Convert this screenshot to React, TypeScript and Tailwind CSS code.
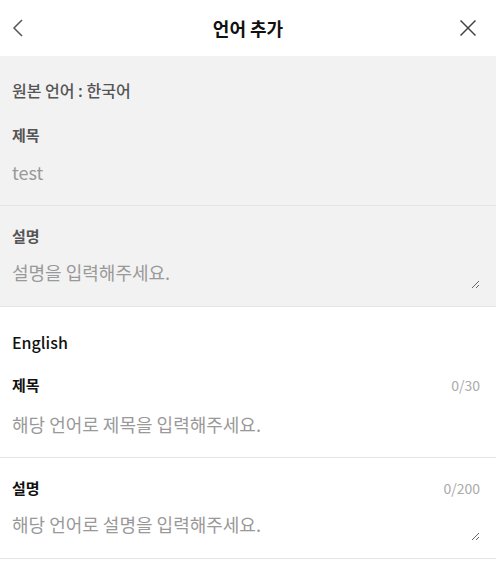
const font = { fontFamily: '"Noto Sans CJK KR", "Noto Sans", sans-serif' };

interface FieldProps {
  label: string;
  placeholder?: string;
  value?: string;
  counter?: string;
  multiline?: boolean;
  disabled?: boolean;
  last?: boolean;
}

function Field({ label, placeholder, value, counter, multiline, disabled, last }: FieldProps) {
  return (
    <div className={`pl-3 pr-4 ${last ? "" : "border-b border-[#e4e4e4]"} ${multiline ? "pt-[19px] pb-[17px]" : "pt-[20px] pb-[21px]"}`}>
      <div className="flex items-center justify-between h-[22px]">
        <span className={`text-[15px] font-bold leading-[22px] ${disabled ? "text-[#555]" : "text-[#111]"}`}>{label}</span>
        {counter && <span className="text-[14px] text-[#aaa] leading-[22px]">{counter}</span>}
      </div>
      {multiline ? (
        <textarea
          readOnly
          rows={1}
          placeholder={placeholder}
          style={font}
          className="mt-[13px] block w-full h-[29px] bg-transparent text-[18px] leading-[24px] outline-none placeholder:text-[#999] text-[#999]"
        />
      ) : (
        <input
          readOnly
          defaultValue={value}
          placeholder={placeholder}
          style={font}
          className={`${disabled ? "mt-[14px]" : "mt-[16px]"} block w-full h-[24px] bg-transparent text-[18px] leading-[24px] outline-none placeholder:text-[#999] text-[#999]`}
        />
      )}
    </div>
  );
}

export default function App() {
  return (
    <div className="w-[496px] h-[582px] bg-white overflow-hidden" style={font}>
      {/* Header */}
      <div className="h-14 grid grid-cols-[1fr_auto_1fr] items-center px-5">
        <button className="-ml-2 w-3 h-5 flex items-center justify-center text-[#555]" aria-label="back">
          <svg width="12" height="20" viewBox="0 0 12 20" fill="none" stroke="currentColor" strokeWidth="1.5">
            <polyline points="10,2 2,10 10,18" />
          </svg>
        </button>
        <h1 className="text-[18px] font-bold text-[#111]">언어 추가</h1>
        <button className="justify-self-end w-4 h-4 flex items-center justify-center text-[#444]" aria-label="close">
          <svg width="16" height="16" viewBox="0 0 16 16" fill="none" stroke="currentColor" strokeWidth="1.5">
            <line x1="0.5" y1="0.5" x2="15.5" y2="15.5" />
            <line x1="15.5" y1="0.5" x2="0.5" y2="15.5" />
          </svg>
        </button>
      </div>

      {/* Original language (read only) */}
      <div className="bg-[#f2f2f2] border-b border-[#e4e4e4]">
        <div className="pl-3 pt-[23px] text-[16px] font-medium leading-[22px] text-[#555]">원본 언어 : 한국어</div>
        <div className="mt-[3px]">
          <Field label="제목" value="test" disabled />
        </div>
        <Field label="설명" placeholder="설명을 입력해주세요." multiline disabled last />
      </div>

      {/* Target language */}
      <div className="pt-[23px]">
        <div className="pl-3 text-[16px] font-medium leading-[24px] text-[#111]">English</div>
        <Field label="제목" placeholder="해당 언어로 제목을 입력해주세요." counter="0/30" />
        <Field label="설명" placeholder="해당 언어로 설명을 입력해주세요." counter="0/200" multiline />
      </div>
    </div>
  );
}
